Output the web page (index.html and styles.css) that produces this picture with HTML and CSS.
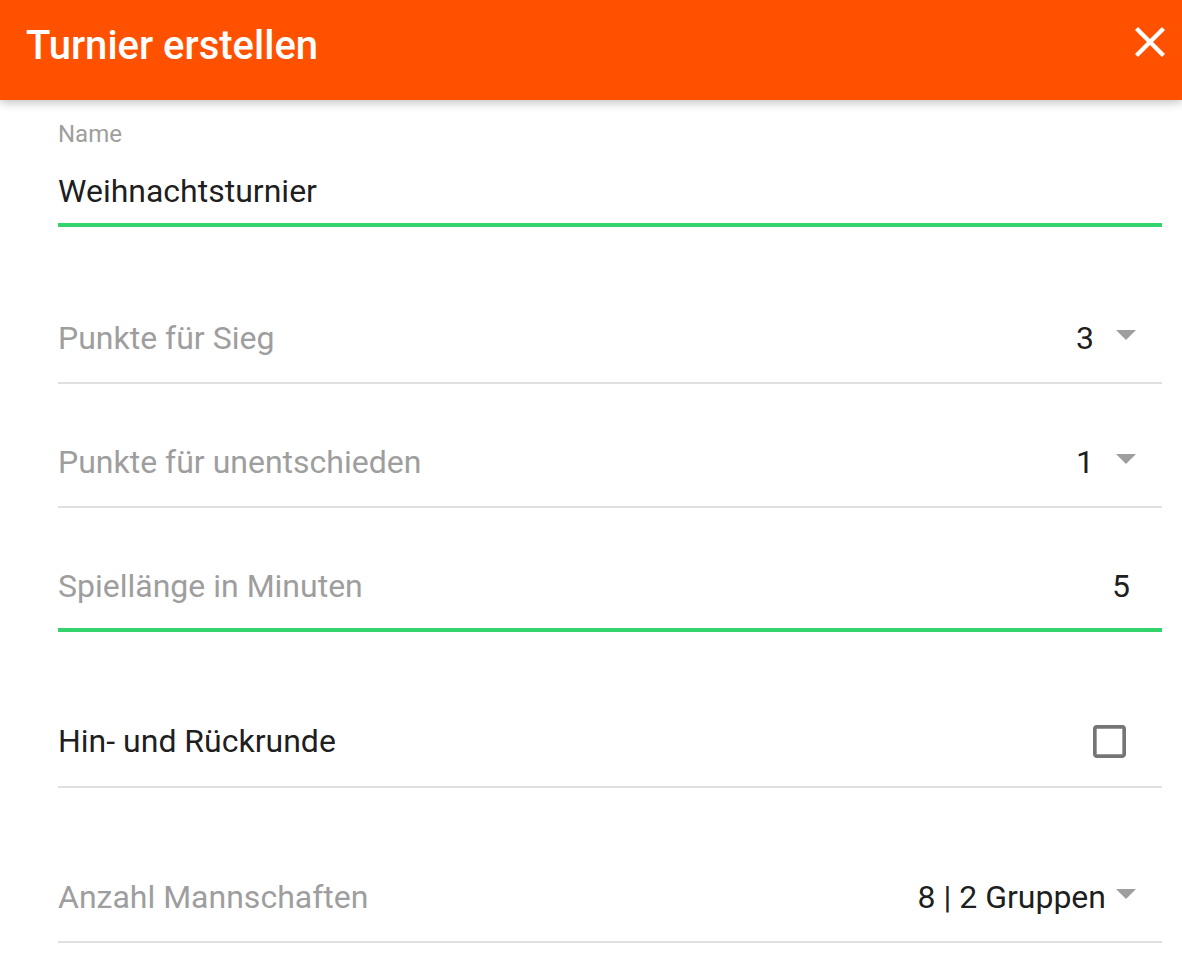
FILE: index.html
```html
<!DOCTYPE html>
<html lang="de">
<head>
<meta charset="utf-8">
<title>Turnier erstellen</title>
<link rel="stylesheet" href="styles.css">
</head>
<body>
<div class="dialog">
  <header class="appbar">
    <h1 class="title">Turnier erstellen</h1>
    <button class="close" aria-label="Schließen">
      <svg viewBox="5 5 14 14" width="30" height="30"><path fill="#fff" d="M19 6.41L17.59 5 12 10.59 6.41 5 5 6.41 10.59 12 5 17.59 6.41 19 12 13.41 17.59 19 19 17.59 13.41 12z"/></svg>
    </button>
  </header>
  <main class="content">
    <div class="textfield">
      <div class="float-label">Name</div>
      <div class="input-value">Weihnachtsturnier</div>
    </div>

    <div class="row row-select row-first">
      <span class="row-label">Punkte für Sieg</span>
      <span class="row-value">3</span>
      <svg class="arrow" viewBox="0 0 20 10" width="20" height="10"><path d="M0 0L10 10L20 0z" fill="#9e9e9e"/></svg>
    </div>

    <div class="row row-select">
      <span class="row-label">Punkte für unentschieden</span>
      <span class="row-value">1</span>
      <svg class="arrow" viewBox="0 0 20 10" width="20" height="10"><path d="M0 0L10 10L20 0z" fill="#9e9e9e"/></svg>
    </div>

    <div class="row row-input">
      <span class="row-label">Spiellänge in Minuten</span>
      <span class="row-value row-value-input">5</span>
    </div>

    <div class="row row-check">
      <span class="row-label row-label-dark">Hin- und Rückrunde</span>
      <svg class="checkbox" viewBox="3 3 18 18" width="33" height="33"><path fill="#757575" d="M19 5v14H5V5h14m0-2H5c-1.11 0-2 .9-2 2v14c0 1.1.89 2 2 2h14c1.1 0 2-.9 2-2V5c0-1.1-.9-2-2-2z"/></svg>
    </div>

    <div class="row row-select row-last">
      <span class="row-label">Anzahl Mannschaften</span>
      <span class="row-value row-value-wide">8 | 2 Gruppen</span>
      <svg class="arrow" viewBox="0 0 20 10" width="20" height="10"><path d="M0 0L10 10L20 0z" fill="#9e9e9e"/></svg>
    </div>
  </main>
</div>
</body>
</html>
```

FILE: styles.css
```css
* {
  box-sizing: border-box;
}

html, body {
  margin: 0;
  padding: 0;
  background: #ffffff;
}

body {
  font-family: Roboto, "Liberation Sans", Arial, sans-serif;
  width: 1182px;
  height: 968px;
  overflow: hidden;
}

.dialog {
  display: flex;
  flex-direction: column;
}

.appbar {
  position: relative;
  z-index: 2;
  height: 100px;
  background: #ff5100;
  display: flex;
  align-items: flex-start;
  justify-content: space-between;
  padding: 0 17px 0 26px;
  box-shadow: 0 2px 12px rgba(0, 0, 0, 0.14), 0 2px 8px rgba(0, 0, 0, 0.14);
}

.title {
  margin: 22px 0 0 0;
  font-size: 40px;
  font-weight: 500;
  line-height: 48px;
  color: #ffffff;
}

.close {
  margin-top: 27px;
  padding: 0;
  border: 0;
  background: transparent;
  width: 30px;
  height: 30px;
  display: flex;
}

.content {
  padding: 19px 20px 0 58px;
  display: flex;
  flex-direction: column;
}

.textfield {
  display: flex;
  flex-direction: column;
  border-bottom: 4px solid #33d46b;
  padding-bottom: 8px;
}

.float-label {
  font-size: 24px;
  line-height: 30px;
  color: #9e9e9e;
}

.input-value {
  margin-top: 18px;
  font-size: 32px;
  line-height: 48px;
  color: rgba(0, 0, 0, 0.9);
}

.row {
  display: flex;
  align-items: flex-start;
  font-size: 32px;
  line-height: 48px;
  border-bottom: 2px solid #e0e0e0;
}

.row-label {
  flex: 1;
  color: #9e9e9e;
}

.row-label-dark {
  color: rgba(0, 0, 0, 0.9);
}

.row-value {
  color: rgba(0, 0, 0, 0.9);
  margin-right: 22px;
}

.row-value-wide {
  margin-right: 10px;
}

.arrow {
  margin-top: 16px;
  margin-right: 26px;
}

.row-select {
  margin-top: 54px;
  padding-bottom: 20px;
}

.row-first {
  margin-top: 87px;
}

.row-input {
  margin-top: 54px;
  padding-bottom: 18px;
  border-bottom: 4px solid #33d46b;
}

.row-value-input {
  margin-right: 32px;
}

.row-check {
  margin-top: 85px;
  padding-bottom: 21px;
}

.checkbox {
  margin-top: 8px;
  margin-right: 36px;
}

.row-last {
  margin-top: 85px;
  padding-bottom: 20px;
}
```
